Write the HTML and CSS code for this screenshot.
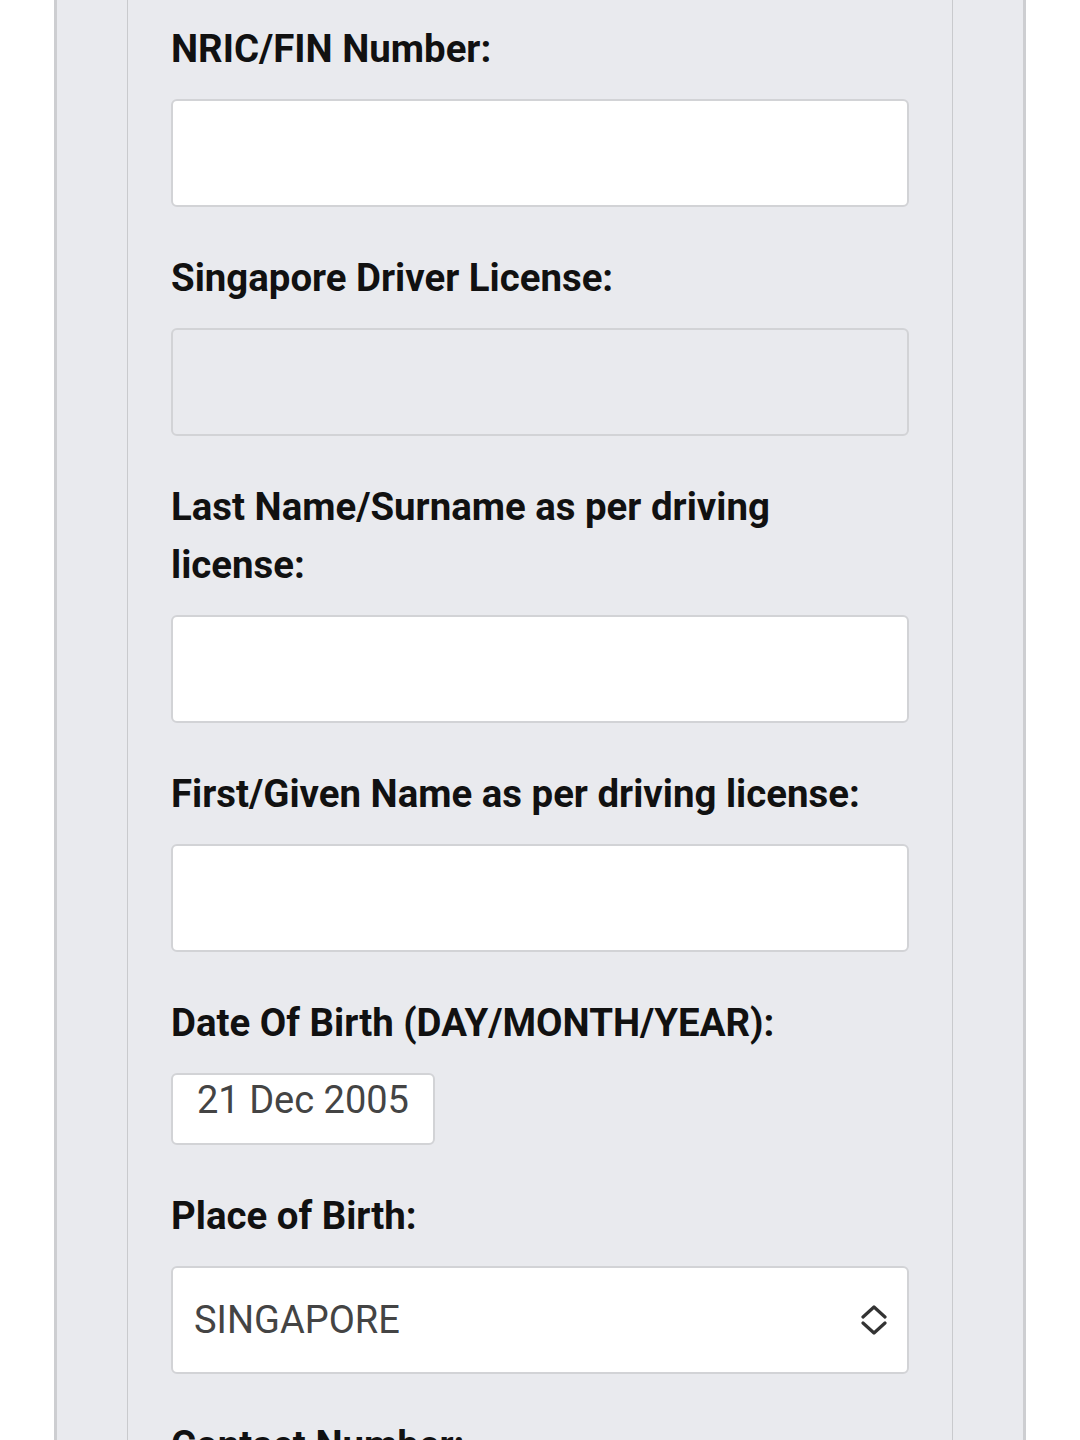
FILE: index.html
```html
<!DOCTYPE html>
<html lang="en">
  <head>
    <meta charset="UTF-8" />
    <meta name="viewport" content="width=device-width, initial-scale=1.0" />
    <title>Driver Details</title>
    <link rel="stylesheet" href="styles.css">
  </head>
  <body>
    <div class="page">
      <form class="form-panel">
        <div class="field">
          <label for="nric">NRIC/FIN Number:</label>
          <input type="text" id="nric" class="text-input" />
        </div>
        <div class="field">
          <label for="license">Singapore Driver License:</label>
          <input type="text" id="license" class="text-input" disabled />
        </div>
        <div class="field">
          <label for="lastName">Last Name/Surname as per driving license:</label>
          <input type="text" id="lastName" class="text-input" />
        </div>
        <div class="field">
          <label for="firstName">First/Given Name as per driving license:</label>
          <input type="text" id="firstName" class="text-input" />
        </div>
        <div class="field">
          <label for="dob">Date Of Birth (DAY/MONTH/YEAR):</label>
          <div class="date-input" id="dob">21 Dec 2005</div>
        </div>
        <div class="field">
          <label for="pob">Place of Birth:</label>
          <div class="select-input" id="pob">
            <span>SINGAPORE</span>
            <svg class="select-arrows" width="26" height="30" viewBox="0 0 26 30">
              <path d="M2 12 L13 2 L24 12" fill="none" stroke="#333" stroke-width="3.2" stroke-linecap="round" stroke-linejoin="round" />
              <path d="M2 18 L13 28 L24 18" fill="none" stroke="#333" stroke-width="3.2" stroke-linecap="round" stroke-linejoin="round" />
            </svg>
          </div>
        </div>
        <div class="field">
          <label for="contact">Contact Number:</label>
          <input type="text" id="contact" class="text-input" />
        </div>
      </form>
    </div>
  </body>
</html>
```

FILE: styles.css
```css
body {
  font-family: Roboto, "Liberation Sans", Arial, sans-serif;
  margin: 0;
  padding: 0;
  background-color: #fff;
  height: 1440px;
  overflow: hidden;
}
.page {
  margin-left: 54px;
  width: 826px;
  padding: 0 70px;
  background-color: #e9eaee;
  border-left: 3px solid #cdced1;
  border-right: 3px solid #cdced1;
  min-height: 1440px;
}
.form-panel {
  margin: 0;
  padding: 20px 43px 0;
  border-left: 1px solid #c9cacd;
  border-right: 1px solid #c9cacd;
  min-height: 1440px;
}
.field {
  margin-bottom: 42px;
}
.field label {
  display: block;
  font-size: 38.4px;
  font-weight: 700;
  line-height: 58px;
  color: #111;
  margin-bottom: 21px;
}
.text-input {
  display: block;
  box-sizing: border-box;
  width: 100%;
  height: 108px;
  margin: 0;
  border: 2px solid #d2d3d6;
  border-radius: 6px;
  background-color: #fff;
  font-size: 38px;
}
.text-input:disabled {
  background-color: #e9eaee;
}
.date-input {
  box-sizing: border-box;
  width: 264px;
  height: 72px;
  padding: 2px 0 0 24px;
  border: 2px solid #d2d3d6;
  border-radius: 6px;
  background-color: #fff;
  font-size: 38px;
  line-height: 46px;
  color: #444;
}
.select-input {
  box-sizing: border-box;
  display: flex;
  align-items: center;
  justify-content: space-between;
  height: 108px;
  padding: 0 20px 0 21px;
  border: 2px solid #d2d3d6;
  border-radius: 6px;
  background-color: #fff;
  font-size: 38px;
  color: #444;
}
```
